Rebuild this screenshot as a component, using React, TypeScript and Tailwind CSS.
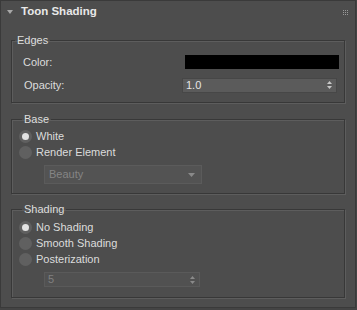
import React from 'react';

function Radio({ label, checked }: { label: string; checked?: boolean }) {
  return (
    <div className="flex items-center h-[16px]">
      <span className="w-[13px] h-[13px] rounded-full bg-[#606060] flex items-center justify-center">
        {checked && <span className="w-[7px] h-[7px] rounded-full bg-[#e2e2e2]" />}
      </span>
      <span className="ml-[4px]">{label}</span>
    </div>
  );
}

function SpinArrows({ color }: { color: string }) {
  return (
    <svg width="7" height="10" viewBox="0 0 7 10">
      <path d="M3.5 1 L6 4 L1 4 Z" fill={color} />
      <path d="M3.5 9 L6 6 L1 6 Z" fill={color} />
    </svg>
  );
}

function Group({ title, className, children }: { title: string; className?: string; children: React.ReactNode }) {
  return (
    <fieldset
      className={`mx-[10px] border border-[#383838] shadow-[1px_1px_0_#5d5d5d,inset_1px_1px_0_#5d5d5d] ${className ?? ''}`}
    >
      <legend className="ml-[3px] px-[2px] leading-[14px] text-[#dedede]">{title}</legend>
      {children}
    </fieldset>
  );
}

export default function App() {
  return (
    <div
      className="w-[357px] h-[310px] bg-[#444444] text-[11px] text-[#dcdcdc]"
      style={{ fontFamily: '"Liberation Sans", Arial, sans-serif' }}
    >
      <div className="w-[356px] h-[308px] bg-[#4d4d4d] border border-[#3a3a3a]">
        {/* Header */}
        <div className="flex items-center h-[22px] pl-[6px] pr-[7px]">
          <svg width="6" height="5" viewBox="0 0 6 5" className="mr-[8px]">
            <path d="M0 0 L6 0 L3 4 Z" fill="#a8a8a8" />
          </svg>
          <span className="font-bold text-[11.5px] text-[#e8e8e8]">Toon Shading</span>
          <div className="ml-auto grid grid-cols-3 gap-[1px]">
            {Array.from({ length: 9 }).map((_, i) => (
              <span key={i} className="w-[1px] h-[1px] bg-[#9a9a9a]" />
            ))}
          </div>
        </div>

        <div className="pt-[10px]">
          {/* Edges */}
          <Group title="Edges" className="pb-[10px]">
            <div className="flex items-center mt-[8px] h-[14px]">
              <span className="ml-[11px] w-[162px]">Color:</span>
              <div className="w-[154px] h-[14px] bg-black" />
            </div>
            <div className="flex items-center mt-[9px] h-[14px]">
              <span className="ml-[12px] w-[158px]">Opacity:</span>
              <div className="w-[155px] h-[15px] bg-[#5b5b5b] border border-[#474747] flex items-center pl-[3px] pr-[3px]">
                <span className="text-[#e6e6e6]">1.0</span>
                <span className="ml-auto flex">
                  <SpinArrows color="#c8c8c8" />
                </span>
              </div>
            </div>
          </Group>

          {/* Base */}
          <Group title="Base" className="mt-[9px] pb-[9px] pl-[7px]">
            <div className="mt-[2px]">
              <Radio label="White" checked />
              <Radio label="Render Element" />
            </div>
            <div className="mt-[5px] ml-[25px] w-[158px] h-[19px] bg-[#535353] border border-[#5b5b5b] flex items-center pl-[4px] pr-[6px] text-[#858585]">
              <span>Beauty</span>
              <svg width="7" height="4" viewBox="0 0 7 4" className="ml-auto">
                <path d="M0 0 L7 0 L3.5 4 Z" fill="#8a8a8a" />
              </svg>
            </div>
          </Group>

          {/* Shading */}
          <Group title="Shading" className="mt-[8px] pb-[10px] pl-[7px]">
            <div className="mt-[3px]">
              <Radio label="No Shading" checked />
              <Radio label="Smooth Shading" />
              <Radio label="Posterization" />
            </div>
            <div className="mt-[5px] ml-[25px] w-[156px] h-[15px] bg-[#515151] border border-[#5a5a5a] flex items-center pl-[3px] pr-[3px] text-[#808080]">
              <span>5</span>
              <span className="ml-auto flex">
                <SpinArrows color="#8a8a8a" />
              </span>
            </div>
          </Group>
        </div>
      </div>
    </div>
  );
}
